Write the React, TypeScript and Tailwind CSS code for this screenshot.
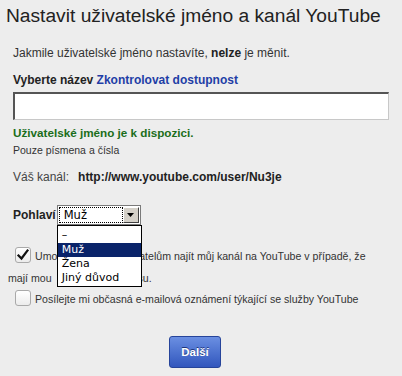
import React from "react";

function Check() {
  return (
    <svg width="14" height="14" viewBox="0 0 14 14" className="block">
      <path d="M2.5 7.5 L5.5 10.5 L11.5 2.5" fill="none" stroke="#111" strokeWidth="2.2" strokeLinecap="square" />
    </svg>
  );
}

function Box({ checked }: { checked?: boolean }) {
  return (
    <div className="w-[16px] h-[16px] shrink-0 rounded-[3px] border border-[#a9a9a9] bg-gradient-to-b from-[#ffffff] to-[#ececec] flex items-center justify-center">
      {checked ? <Check /> : null}
    </div>
  );
}

export default function App() {
  return (
    <div
      className="w-[402px] h-[376px] overflow-hidden bg-[#ededed] text-[#333] relative"
      style={{ fontFamily: '"Liberation Sans", Arial, sans-serif' }}
    >
      <div className="pl-[6px] pt-[4px] text-[19.2px] leading-[24px] text-[#222]">
        Nastavit uživatelské jméno a kanál YouTube
      </div>

      <div className="pl-[13px] pr-[13px] text-[12px] leading-[16px]">
        <div className="mt-[17px]">
          Jakmile uživatelské jméno nastavíte, <b className="text-[#222]">nelze</b> je měnit.
        </div>

        <div className="mt-[11px] font-bold text-[#222]">
          Vyberte název <span className="text-[#1f3ea6]">Zkontrolovat dostupnost</span>
        </div>

        <div className="mt-[4px] h-[28px] w-[376px] bg-white border border-[#c8c8c8] border-t-[2px] border-l-[2px] border-t-[#555] border-l-[#555]" />

        <div className="mt-[5px] font-bold text-[11.7px] text-[#1b6e1b]">Uživatelské jméno je k dispozici.</div>

        <div className="mt-[1px] text-[10.5px] text-[#333]">Pouze písmena a čísla</div>

        <div className="mt-[11px] flex">
          <span className="text-[#444]">Váš kanál:</span>
          <span className="ml-[9px] font-bold text-[#222]">http://www.youtube.com/user/Nu3je</span>
        </div>

        <div className="mt-[20px] flex items-center h-[20px]">
          <span className="font-bold text-[#222]">Pohlaví</span>
          <div className="relative ml-[1px]">
            <div
              className="w-[84px] h-[20px] border border-[#7a7a7a] bg-white flex items-stretch p-[1px]"
              style={{ fontFamily: '"DejaVu Sans", Verdana, sans-serif' }}
            >
              <div className="flex-1 border border-dotted border-black text-[11.5px] leading-[14px] text-black pl-[4px]">
                Muž
              </div>
              <div className="w-[16px] bg-[#d4d0c8] border border-t-white border-l-white border-b-[#404040] border-r-[#404040] flex items-center justify-center">
                <svg width="7" height="4" viewBox="0 0 7 4"><path d="M0 0 H7 L3.5 4 Z" fill="#000" /></svg>
              </div>
            </div>
            <div
              className="absolute left-0 top-[20px] w-[85px] border border-black bg-white text-[11px] leading-[14px] text-black z-10"
              style={{ fontFamily: '"DejaVu Sans", Verdana, sans-serif' }}
            >
              <div className="h-[17px] pl-[4px] leading-[18px]">–</div>
              <div className="h-[14px] pl-[4px] bg-[#0a246a] text-white">Muž</div>
              <div className="h-[14px] pl-[4px]">Žena</div>
              <div className="h-[15px] pl-[4px]">Jiný důvod</div>
            </div>
          </div>
        </div>

        <div className="mt-[21px] flex items-center h-[18px] text-[10.6px]">
          <div className="ml-[2px]"><Box checked /></div>
          <span className="ml-[4px] mt-[1px] whitespace-nowrap text-[#333]">
            Umožnit ostatním uživatelům najít můj kanál na YouTube v případě, že
          </span>
        </div>
        <div className="mt-[6px] ml-[-5px] text-[10.6px] whitespace-nowrap text-[#333]">
          mají mou <span className="ml-[7px]">e-mailovou adresu.</span>
        </div>

        <div className="mt-[3px] flex items-center h-[18px] text-[10.6px]">
          <div className="ml-[2px]"><Box /></div>
          <span className="ml-[4px] mt-[2px] whitespace-nowrap text-[#333]">
            Posílejte mi občasná e-mailová oznámení týkající se služby YouTube
          </span>
        </div>

        <div className="mt-[29px] pl-[156px]">
          <button className="w-[52px] h-[32px] rounded-[3px] border border-[#26449a] bg-gradient-to-b from-[#6b8fe2] to-[#3256bd] text-white font-bold text-[11.5px] [text-shadow:0_-1px_0_#1c347a]">
            Další
          </button>
        </div>
      </div>
    </div>
  );
}
